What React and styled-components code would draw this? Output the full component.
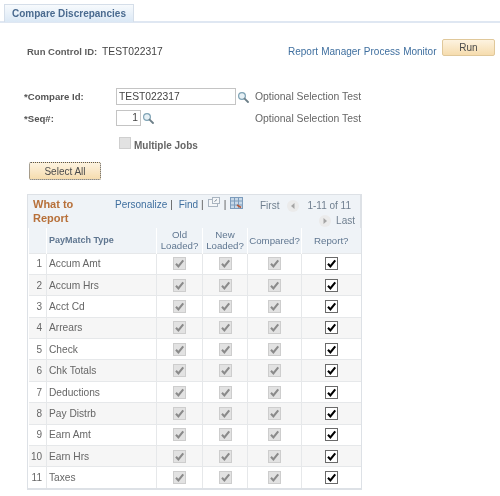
import React from 'react';
import styled, { createGlobalStyle } from 'styled-components';

const GlobalStyle = createGlobalStyle`
  html, body {
    margin: 0;
    padding: 0;
    background: #fff;
    font-family: 'Liberation Sans', Arial, sans-serif;
  }
`;

const Page = styled.div`
  width: 500px;
  height: 496px;
  overflow: hidden;
  padding-top: 4px;
  box-sizing: border-box;
  font-size: 10px;
  color: #555;
  filter: blur(0.4px);
`;

const TabBar = styled.div`
  display: flex;
  height: 17px;
  border-bottom: 2px solid #dfe7f2;
  padding-left: 4px;
`;

const Tab = styled.div`
  width: 130px;
  height: 18px;
  box-sizing: border-box;
  border: 1px solid #d5dee9;
  border-bottom: none;
  background: linear-gradient(#f7fafd, #dbe8f5);
  color: #4a6a8f;
  font-weight: bold;
  font-size: 10px;
  line-height: 17px;
  padding-left: 7px;
`;

const RunRow = styled.div`
  display: flex;
  align-items: flex-end;
  height: 18px;
  margin-top: 15px;
  padding-left: 27px;
  line-height: 9px;
`;

const RunLabel = styled.span`
  font-weight: bold;
  color: #5c5c5c;
  width: 75px;
  font-size: 9.5px;
`;

const RunValue = styled.span`
  color: #444;
  font-size: 10.3px;
  width: 186px;
`;

const Links = styled.a`
  color: #3f6f9f;
  font-size: 10px;
  white-space: pre;
  width: 154px;
  word-spacing: 0.4px;
`;

const Button = styled.button`
  width: ${(p) => p.$w}px;
  height: ${(p) => p.$h}px;
  box-sizing: border-box;
  padding: 0;
  border: ${(p) => (p.$dotted ? '1px dotted #555' : '1px solid #e0c89a')};
  border-radius: 2px;
  background: linear-gradient(#fdf3e0, #f6dcae);
  font-family: inherit;
  font-size: 10px;
  color: #4a4a4a;
`;

const FormRow = styled.div`
  display: flex;
  align-items: center;
  height: ${(p) => p.$h}px;
  margin-top: ${(p) => p.$mt}px;
  padding-left: 24px;
`;

const FieldLabel = styled.label`
  width: 92px;
  font-weight: bold;
  font-size: 9.6px;
  color: #555;
`;

const FieldBox = styled.div`
  width: ${(p) => p.$w}px;
  height: ${(p) => p.$h}px;
  box-sizing: border-box;
  border: 1px solid #c4c4c4;
  padding: 0 2px;
  font-size: 10.3px;
  line-height: ${(p) => p.$h - 2}px;
  color: #444;
  text-align: ${(p) => (p.$right ? 'right' : 'left')};
`;

const Hint = styled.span`
  color: #666;
  font-size: 10.4px;
`;

const LookupSlot = styled.span`
  display: flex;
  width: ${(p) => p.$w}px;
  padding-left: 1px;
`;

const MultiRow = styled.div`
  display: flex;
  align-items: flex-end;
  gap: 3px;
  height: 14px;
  margin-top: 11px;
  padding-left: 119px;
  font-weight: bold;
  font-size: 10px;
  line-height: 10px;
  color: #666;
`;

const DisabledBox = styled.span`
  align-self: flex-start;
  width: 12px;
  height: 12px;
  box-sizing: border-box;
  background: #e2e2e2;
  border: 1px solid #cfcfcf;
`;

const SelectRow = styled.div`
  display: flex;
  margin-top: 11px;
  padding-left: 29px;
`;

const Grid = styled.div`
  width: 335px;
  margin: 14px 0 0 27px;
  box-sizing: border-box;
  border: 1px solid #dde1e6;
  border-right-width: 2px;
  border-bottom-width: 2px;
`;

const GridTitle = styled.div`
  display: flex;
  height: 33px;
  background: #eff3f7;
  font-size: 10px;
`;

const TitleText = styled.div`
  width: 87px;
  padding: 3px 0 0 5px;
  box-sizing: border-box;
  color: #b7703a;
  font-weight: bold;
  font-size: 11px;
  line-height: 13.5px;
`;

const Nav = styled.div`
  display: flex;
  align-items: flex-start;
  gap: 3px;
  padding-top: 4px;
  height: 29px;
  color: #3f6f9f;
  white-space: pre;
`;

const Divider = styled.span`
  color: #555;
`;

const NavIcon = styled.span`
  display: flex;
  margin: -2px 1px 0;
`;

const Pager = styled.div`
  flex: 1;
  display: flex;
  flex-direction: column;
  align-items: flex-end;
  padding: 3px 5px 0 0;
  color: #6f7f8f;
`;

const PagerRow = styled.div`
  display: flex;
  align-items: center;
  gap: ${(p) => p.$gap}px;
  height: 15px;
  margin-right: ${(p) => p.$mr || 0}px;
  white-space: pre;
`;

const Table = styled.table`
  border-collapse: collapse;
  table-layout: fixed;
  width: 332px;
`;

const HeadCell = styled.th`
  box-sizing: border-box;
  width: ${(p) => p.$w}px;
  height: 25px;
  padding: 0;
  background: #eff3f7;
  border-left: 1px solid #fff;
  color: #5f7690;
  font-size: 9.7px;
  line-height: 11px;
  font-weight: ${(p) => (p.$strong ? 'bold' : 'normal')};
  text-align: ${(p) => (p.$left ? 'left' : 'center')};
  padding-left: ${(p) => (p.$left ? '2px' : '0')};
`;

const TypeHead = styled(HeadCell)`
  font-size: 9px;
`;

const Row = styled.tr`
  background: ${(p) => (p.$odd ? '#f6f6f6' : '#fff')};
  border-top: 1px solid #e6e8ea;
`;

const NumCell = styled.td`
  height: 20.4px;
  padding: 0 4px 0 0;
  text-align: right;
  font-size: 10px;
  color: #666;
`;

const TypeCell = styled.td`
  padding: 0 0 0 2px;
  border-left: 1px solid #e6e8ea;
  font-size: 10.2px;
  color: #666;
`;

const CheckCell = styled.td`
  padding: 0;
  border-left: 1px solid #e6e8ea;
  text-align: center;
  line-height: 0;
`;

const CheckBox = styled.span`
  display: inline-flex;
  align-items: center;
  justify-content: center;
  width: 13px;
  height: 13px;
  box-sizing: border-box;
  background: ${(p) => (p.$on ? '#fff' : '#e2e2e2')};
  border: 1px solid ${(p) => (p.$on ? '#6a6a6a' : '#cdcdcd')};
`;

const Lookup = () => (
  <svg width="12" height="12" viewBox="0 0 12 12" fill="none">
    <circle cx="5" cy="5" r="3.4" fill="#e6f0f5" stroke="#7fa3b5" strokeWidth="1.2" />
    <path d="M7.6 7.6 L11 11" stroke="#6d7f88" strokeWidth="1.8" strokeLinecap="round" />
  </svg>
);

const Tick = ({ color }) => (
  <svg width="11" height="11" viewBox="0 0 10 10" fill="none">
    <path d="M1.8 5.2 L4 7.6 L8.4 2.2" stroke={color} strokeWidth="1.9" />
  </svg>
);

const Check = ({ on }) => (
  <CheckBox $on={on}>
    <Tick color={on ? '#000' : '#8a8a8a'} />
  </CheckBox>
);

const Zoom = () => (
  <svg width="12" height="11" viewBox="0 0 12 11" fill="none">
    <rect x="0.5" y="2.5" width="9" height="7" fill="#f4f6f8" stroke="#a9b4c0" />
    <rect x="4.5" y="0.5" width="7" height="6" fill="#f4f6f8" stroke="#a9b4c0" />
    <path d="M6.5 4.5 L9 2.5" stroke="#7a8896" />
  </svg>
);

const Download = () => (
  <svg width="13" height="12" viewBox="0 0 13 12">
    <rect x="0.5" y="0.5" width="12" height="11" fill="#c9d9e8" stroke="#7d9cbc" />
    <path d="M0.5 4 H12.5 M0.5 8 H12.5 M4.5 0.5 V11.5 M8.5 0.5 V11.5" stroke="#7d9cbc" />
    <path d="M7 8 L11 10.5" stroke="#b55a3a" strokeWidth="1.6" />
  </svg>
);

const Arrow = ({ left }) => (
  <svg width="14" height="14" viewBox="0 0 14 14">
    <circle cx="7" cy="7" r="6" fill="#ebebeb" />
    <path d={left ? 'M8.5 4 L5 7 L8.5 10 Z' : 'M5.5 4 L9 7 L5.5 10 Z'} fill="#a5a5a5" />
  </svg>
);

const rows = [
  'Accum Amt',
  'Accum Hrs',
  'Acct Cd',
  'Arrears',
  'Check',
  'Chk Totals',
  'Deductions',
  'Pay Distrb',
  'Earn Amt',
  'Earn Hrs',
  'Taxes',
];

const App = () => (
  <Page>
    <GlobalStyle />
    <TabBar>
      <Tab>Compare Discrepancies</Tab>
    </TabBar>
    <RunRow>
      <RunLabel>Run Control ID:</RunLabel>
      <RunValue>TEST022317</RunValue>
      <Links>Report Manager Process Monitor</Links>
      <Button $w={53} $h={17}>Run</Button>
    </RunRow>
    <FormRow $h={17} $mt={32}>
      <FieldLabel>*Compare Id:</FieldLabel>
      <FieldBox $w={120} $h={17}>TEST022317</FieldBox>
      <LookupSlot $w={18}><Lookup /></LookupSlot>
      <Hint>Optional Selection Test</Hint>
    </FormRow>
    <FormRow $h={16} $mt={5}>
      <FieldLabel>*Seq#:</FieldLabel>
      <FieldBox $w={25} $h={16} $right>1</FieldBox>
      <LookupSlot $w={113}><Lookup /></LookupSlot>
      <Hint>Optional Selection Test</Hint>
    </FormRow>
    <MultiRow>
      <DisabledBox />
      Multiple Jobs
    </MultiRow>
    <SelectRow>
      <Button $w={72} $h={18} $dotted>Select All</Button>
    </SelectRow>
    <Grid>
      <GridTitle>
        <TitleText>What to<br />Report</TitleText>
        <Nav>
          Personalize<Divider>|</Divider> Find<Divider>|</Divider>
          <NavIcon><Zoom /></NavIcon>
          <Divider>|</Divider>
          <NavIcon><Download /></NavIcon>
        </Nav>
        <Pager>
          <PagerRow $gap={7} $mr={4}><span>First</span><Arrow left /><span>1-11 of 11</span></PagerRow>
          <PagerRow $gap={4}><Arrow /><span>Last</span></PagerRow>
        </Pager>
      </GridTitle>
      <Table>
        <thead>
          <tr>
            <HeadCell $w={18} />
            <TypeHead $w={110} $left $strong>PayMatch Type</TypeHead>
            <HeadCell $w={46}>Old<br />Loaded?</HeadCell>
            <HeadCell $w={45}>New<br />Loaded?</HeadCell>
            <HeadCell $w={54}>Compared?</HeadCell>
            <HeadCell $w={59}>Report?</HeadCell>
          </tr>
        </thead>
        <tbody>
          {rows.map((name, i) => (
            <Row key={name} $odd={i % 2 === 1}>
              <NumCell>{i + 1}</NumCell>
              <TypeCell>{name}</TypeCell>
              <CheckCell><Check /></CheckCell>
              <CheckCell><Check /></CheckCell>
              <CheckCell><Check /></CheckCell>
              <CheckCell><Check on /></CheckCell>
            </Row>
          ))}
        </tbody>
      </Table>
    </Grid>
  </Page>
);

export default App;
